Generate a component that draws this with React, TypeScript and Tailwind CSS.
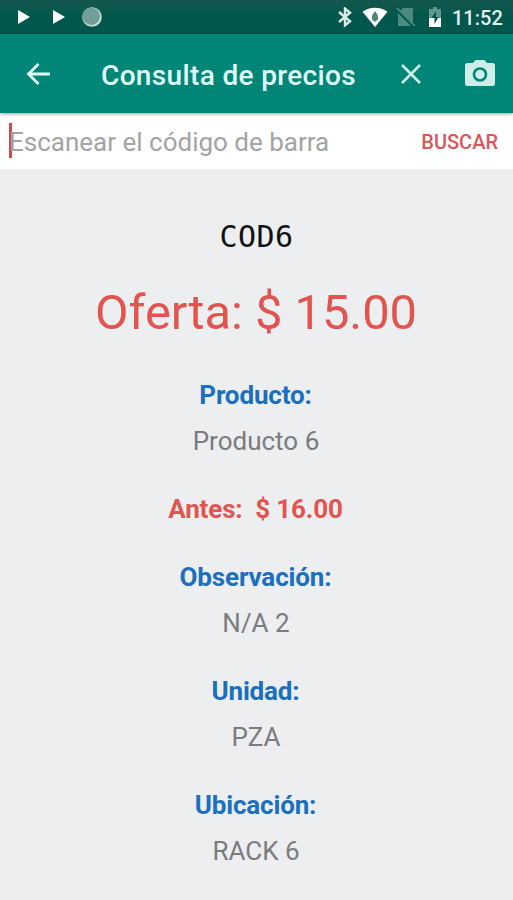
import clsx from "clsx";

interface Detail {
  label: string;
  value: string;
}

const details: Detail[] = [
  { label: "Observación:", value: "N/A 2" },
  { label: "Unidad:", value: "PZA" },
  { label: "Ubicación:", value: "RACK 6" },
];

function PlayIcon({ className }: { className?: string }) {
  return (
    <svg viewBox="0 0 12 14" className={clsx("w-3 h-3.5", className)} fill="#fff">
      <path d="M0 0L12 7L0 14Z" />
    </svg>
  );
}

function StatusBar() {
  return (
    <div className="flex items-center h-[34px] bg-gradient-to-b from-[#13574d] via-[#00574b] to-[#00574b]">
      <PlayIcon className="ml-[18px]" />
      <PlayIcon className="ml-[23px]" />
      <svg viewBox="0 0 20 20" className="w-5 h-5 ml-[17px]">
        <circle cx="10" cy="10" r="9.8" fill="#c4dcd8" />
        <circle cx="9.2" cy="9.2" r="8.7" fill="#6f9f97" />
      </svg>

      {/* bluetooth */}
      <svg viewBox="0 0 14 20" className="w-3.5 h-5 ml-auto" fill="none" stroke="#dcebe8" strokeWidth="2.4">
        <path d="M1 5L12 14.3L7 18.4V1.6L12 5.7L1 15" />
      </svg>
      {/* wifi */}
      <svg viewBox="0 0 26 20" className="w-[26px] h-5 ml-[10px]">
        <path d="M0.5 4.8C7.5 -0.7 18.5 -0.7 25.5 4.8L13 20Z" fill="#fff" />
        <path d="M13 4L16 8.5V12.5L13 15L10 12.5V8.5Z" fill="#4f857c" />
      </svg>
      {/* sin sim */}
      <svg viewBox="0 0 20 20" className="w-5 h-5 ml-[8px]">
        <path d="M7 1H17V19H2V6Z" fill="#4d8980" />
        <path d="M0.5 2L18.5 20" stroke="#00574b" strokeWidth="3.5" />
        <path d="M1 1L19 19" stroke="#5b938a" strokeWidth="1.5" />
      </svg>
      {/* batería */}
      <svg viewBox="0 0 12 20" className="w-3 h-5 ml-[13px]">
        <path d="M4 0H8V2H12V12H0V2H4Z" fill="#5f968e" />
        <path d="M0 11H12V20H0Z" fill="#fff" />
        <path d="M7 4L2.5 11H5.5V17L9.5 10H7Z" fill="#00574b" />
      </svg>
      <span className="w-[52px] ml-[11px] mr-[9px] mt-0.5 text-[20px] leading-6 font-medium text-[#e4f2ef] whitespace-nowrap">
        11:52
      </span>
    </div>
  );
}

function Toolbar() {
  return (
    <header className="relative flex items-center h-[79px] bg-[#008577] shadow-[0_1px_3px_rgba(0,0,0,0.4)]">
      <button className="ml-[26px]" aria-label="Volver">
        <svg viewBox="0 0 24 22" className="w-6 h-[22px]" fill="none" stroke="#e0fffa" strokeWidth="2.8">
          <path d="M24 11H2.5M12.5 1L2.5 11L12.5 21" />
        </svg>
      </button>
      <h1 className="w-[256px] ml-[51px] mt-1 text-[28px] leading-8 tracking-[0.35px] font-medium text-[#e0fffa] whitespace-nowrap">
        Consulta de precios
      </h1>
      <button className="ml-11" aria-label="Cerrar">
        <svg viewBox="0 0 20 20" className="w-5 h-5" fill="none" stroke="#cdf0ea" strokeWidth="2.6">
          <path d="M1 1L19 19M19 1L1 19" />
        </svg>
      </button>
      <button className="ml-11 -mt-0.5" aria-label="Cámara">
        <svg viewBox="0 0 30 26" className="w-[30px] h-[26px]">
          <path
            d="M10.5 0H19.5L22 3H27.5Q30 3 30 5.5V23.5Q30 26 27.5 26H2.5Q0 26 0 23.5V5.5Q0 3 2.5 3H8Z"
            fill="#cdeee9"
          />
          <circle cx="15" cy="14.5" r="6" fill="none" stroke="#008577" strokeWidth="2.6" />
        </svg>
      </button>
    </header>
  );
}

function SearchBar() {
  return (
    <div className="flex items-center justify-between h-14 pl-[9px] pr-[15px] bg-white">
      <div className="flex items-center mt-0.5">
        <span className="w-[3px] h-[35px] -mr-[3px] -mt-1 bg-[#d5474b]" />
        <span className="text-[26px] leading-8 text-[#a3a3a3] whitespace-nowrap">
          Escanear el código de barra
        </span>
      </div>
      <button className="mt-0.5 text-[20px] leading-6 font-medium text-[#dd5558]">BUSCAR</button>
    </div>
  );
}

function Label({ children }: { children: string }) {
  return (
    <div className="h-[46px] pr-0.5 text-[26px] leading-[46px] tracking-[-0.15px] font-bold text-[#1b6fc0]">
      {children}
    </div>
  );
}

function Value({ children }: { children: string }) {
  return <div className="h-[46px] pr-px text-[26px] leading-[46px] text-[#7b7c7d]">{children}</div>;
}

export default function App() {
  return (
    <div className="flex flex-col w-full h-[900px] overflow-hidden bg-[#eceeef] font-[Roboto,sans-serif]">
      <StatusBar />
      <Toolbar />
      <SearchBar />
      <main className="flex flex-col pt-[48px] text-center whitespace-pre">
        <div className="h-10 text-[30px] leading-10 tracking-[0.4px] text-[#101314] font-['DejaVu_Sans_Mono',monospace]">
          COD6
        </div>
        <div className="h-16 mt-6 pr-px text-[48.8px] leading-[64px] text-[#e25450]">Oferta: $ 15.00</div>

        <div className="mt-[27px]">
          <Label>Producto:</Label>
          <Value>Producto 6</Value>
        </div>
        <div className="mt-[22px] h-[46px] pr-0.5 text-[26px] leading-[46px] tracking-[-0.15px] font-bold text-[#e25450]">
          {"Antes:  $ 16.00"}
        </div>
        {details.map((d) => (
          <div key={d.label} className="mt-[22px]">
            <Label>{d.label}</Label>
            <Value>{d.value}</Value>
          </div>
        ))}
      </main>
    </div>
  );
}
